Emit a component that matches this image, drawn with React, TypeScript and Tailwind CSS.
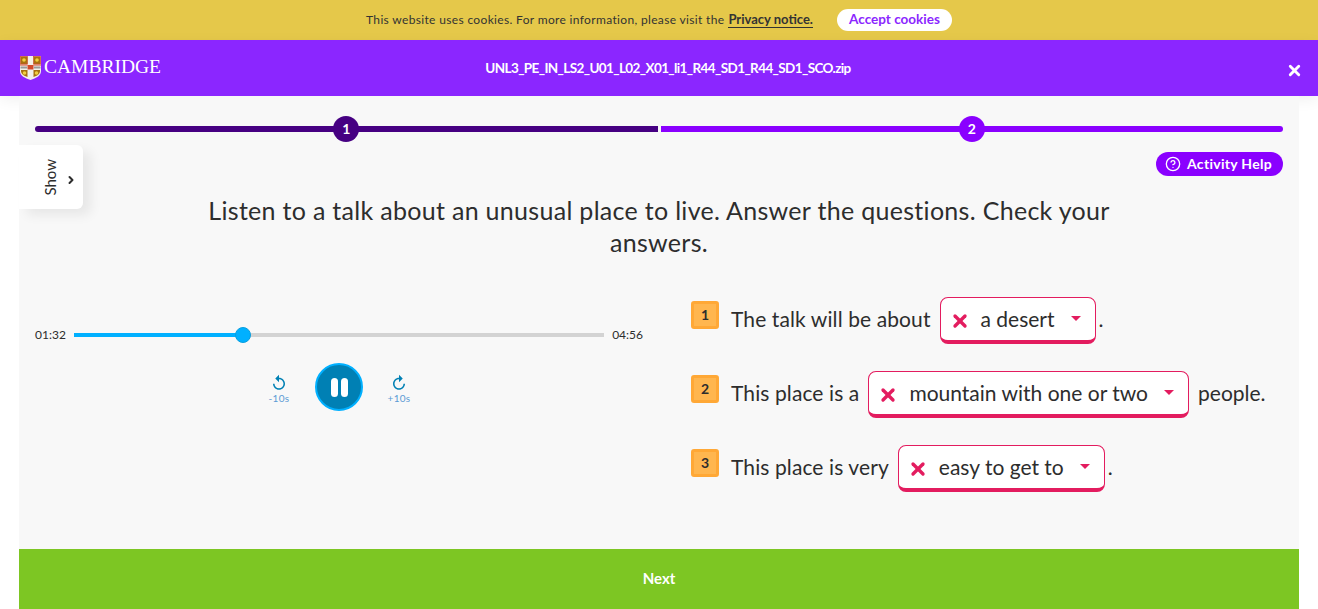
import { ChevronRight, CircleHelp, X } from "lucide-react";

const FONT = "font-['Lato','Noto_Sans',sans-serif]";

const QUESTIONS = [
  { n: 1, before: "The talk will be about", answer: "a desert", after: "." },
  { n: 2, before: "This place is a", answer: "mountain with one or two", after: "people." },
  { n: 3, before: "This place is very", answer: "easy to get to", after: "." },
];

const REPLAY =
  "M12 5V1L7 6l5 5V7c3.31 0 6 2.69 6 6s-2.69 6-6 6-6-2.69-6-6H4c0 4.42 3.58 8 8 8s8-3.58 8-8-3.58-8-8-8z";

function Crest() {
  return (
    <svg width="21" height="24" viewBox="0 0 21 24" aria-hidden>
      <path d="M0 0h21v15c0 5-5 7-10.500 9C5 22 0 20 0 15z" fill="#f4f1ea" />
      <rect x="0.500" y="0.500" width="7" height="7.500" fill="#a8700f" stroke="#d2492a" strokeWidth="0.600" />
      <rect x="13.500" y="0.500" width="7" height="7.500" fill="#a8700f" stroke="#d2492a" strokeWidth="0.600" />
      <path d="M1 14h6.500v7C4 20 1 18 1 15z" fill="#a8700f" />
      <path d="M13.500 14H20v1c0 3-3 5-6.500 6z" fill="#a8700f" />
      <rect x="7.500" y="9" width="6" height="4.500" fill="#d2492a" />
      <rect x="0" y="8.500" width="7.500" height="1" fill="#d2492a" />
      <rect x="13.500" y="8.500" width="7.500" height="1" fill="#d2492a" />
      <rect x="0.500" y="10.500" width="6.500" height="2" fill="#9a9a9a" />
      <rect x="14" y="10.500" width="6.500" height="2" fill="#9a9a9a" />
      <circle cx="4" cy="4" r="1.800" fill="#f0d040" />
      <circle cx="17" cy="4" r="1.800" fill="#f0d040" />
      <circle cx="4.500" cy="17" r="1.800" fill="#f0d040" />
      <circle cx="16.500" cy="17" r="1.800" fill="#f0d040" />
    </svg>
  );
}

function Step({ n, color, rounded }: { n: number; color: string; rounded: string }) {
  return (
    <div className={`relative h-1.5 flex-1 ${rounded} ${color}`}>
      <span
        className={`absolute left-1/2 top-1/2 flex size-[26px] -translate-x-1/2 -translate-y-1/2 items-center justify-center rounded-full text-sm font-bold text-white ${color}`}
      >
        {n}
      </span>
    </div>
  );
}

export default function App() {
  return (
    <div className={`flex h-[609px] flex-col overflow-hidden bg-white text-[#2d2d2d] ${FONT}`}>
      <div className="flex h-10 items-center justify-center bg-[#e5c84a] text-xs tracking-[0.34px] text-[#333]">
        <span>This website uses cookies. For more information, please visit the</span>
        <a className="ml-1 border-b border-[#333] text-[13px] font-bold leading-[15px] tracking-normal">Privacy notice.</a>
        <button className="ml-6 h-[22px] w-[115px] rounded-full bg-white text-[13.500px] font-bold tracking-normal text-[#8b26ff]">
          Accept cookies
        </button>
      </div>

      <header className="relative z-10 flex h-14 items-center justify-center bg-[#8b26ff] text-white shadow-[0_4px_14px_rgba(0,0,0,0.06)]">
        <div className="absolute left-5 top-4 flex items-center gap-[3px]">
          <Crest />
          <span className="mb-[2px] font-['Liberation_Serif',serif] text-[19.500px] leading-none">CAMBRIDGE</span>
        </div>
        <span className="ml-[18px] text-[13.500px] font-bold tracking-[-0.61px]">UNL3_PE_IN_LS2_U01_L02_X01_li1_R44_SD1_R44_SD1_SCO.zip</span>
        <X className="absolute right-[15px] top-[22px] size-[17px]" strokeWidth={4} />
      </header>

      <main className="relative z-20 mx-[19px] flex flex-1 flex-col bg-[#f8f8f8] px-4 pt-[30px]">
        <div className="flex gap-[3px]">
          <Step n={1} color="bg-[#460082]" rounded="rounded-l-full" />
          <Step n={2} color="bg-[#8a00ff]" rounded="rounded-r-full" />
        </div>

        <div className="mt-5 flex justify-end">
          <button className="flex h-6 w-[127px] items-center gap-1.5 rounded-full bg-[#8a00ff] pl-[9px] text-sm font-bold tracking-[0.3px] text-white">
            <CircleHelp className="size-4" />
            Activity Help
          </button>
        </div>

        {/* Collapsed side tab */}
        <div className="absolute left-0 top-[49px] flex h-16 w-16 items-center gap-[5px] rounded-r-md bg-white pl-[21px] shadow-[8px_6px_12px_rgba(0,0,0,0.07)]">
          <span className="rotate-180 text-[15px] leading-5 [writing-mode:vertical-rl]">Show</span>
          <ChevronRight className="mt-1.5 size-3" strokeWidth={4} />
        </div>

        <h1 className="mx-auto mt-[18px] w-[940px] text-center text-[25px] leading-8 tracking-[0.3px] text-[#2d2d2d]">
          Listen to a talk about an unusual place to live. Answer the questions. Check your answers.
        </h1>

        <div className="mt-[39px] flex">
          {/* Audio player */}
          <div className="w-[608px] pt-[30px]">
            <div className="flex items-center gap-2 text-xs">
              <span>01:32</span>
              <div className="relative h-1 flex-1 bg-[#d3d3d3]">
                <div className="h-1 w-[31.900%] bg-[#00b0ff]" />
                <span className="absolute left-[31.900%] top-1/2 size-4 -translate-x-1/2 -translate-y-1/2 rounded-full border border-[#0a9fdf] bg-[#00b0ff]" />
              </div>
              <span>04:56</span>
            </div>
            <div className="mt-[20px] flex items-center justify-center gap-5">
              <div className="flex w-8 flex-col items-center pt-[3px] text-[10px] leading-3 tracking-[0.3px] text-[#5b9bd5]">
                <svg viewBox="0 0 24 24" className="size-[18px] fill-[#0080b4]" aria-hidden>
                  <path d={REPLAY} />
                </svg>
                -10s
              </div>
              <div className="flex size-12 items-center justify-center gap-[3px] rounded-full border-2 border-[#00b0ff] bg-[#0080b4]">
                <span className="h-[19px] w-[7px] rounded-full bg-white" />
                <span className="h-[19px] w-[7px] rounded-full bg-white" />
              </div>
              <div className="flex w-8 flex-col items-center pt-[3px] text-[10px] leading-3 tracking-[0.3px] text-[#5b9bd5]">
                <svg viewBox="0 0 24 24" className="size-[18px] -scale-x-100 fill-[#0080b4]" aria-hidden>
                  <path d={REPLAY} />
                </svg>
                +10s
              </div>
            </div>
          </div>

          {/* Questions */}
          <ol className="ml-12 flex flex-col gap-[27px]">
            {QUESTIONS.map((q) => (
              <li key={q.n} className="flex h-[47px] items-center text-[21px]">
                <span className="mb-3 flex size-7 items-center justify-center rounded-[3px] border-[3px] border-[#ffa836] bg-[#ffb64f] text-sm font-bold">
                  {q.n}
                </span>
                <span className="mb-[4px] ml-3 tracking-[0.1px]">{q.before}</span>
                <span className="ml-[9px] flex h-[47px] items-center rounded-lg border border-b-4 border-[#e31c5f] bg-white pb-0.5 pl-[9px] pr-[14px]">
                  <X className="mt-[6px] size-5 text-[#e31c5f]" strokeWidth={4} />
                  <span className="ml-[11px] mt-[1px]">{q.answer}</span>
                  <span className="ml-4 size-0 border-x-[5px] border-t-[5px] border-x-transparent border-t-[#e31c5f]" />
                </span>
                <span className={q.after === "." ? "mb-[4px] ml-[3px]" : "mb-[4px] ml-[9px]"}>{q.after}</span>
              </li>
            ))}
          </ol>
        </div>
      </main>

      <button className="relative z-20 mx-[19px] h-[60px] bg-[#7dc623] pb-0.5 text-[15px] font-bold text-white">Next</button>
    </div>
  );
}
